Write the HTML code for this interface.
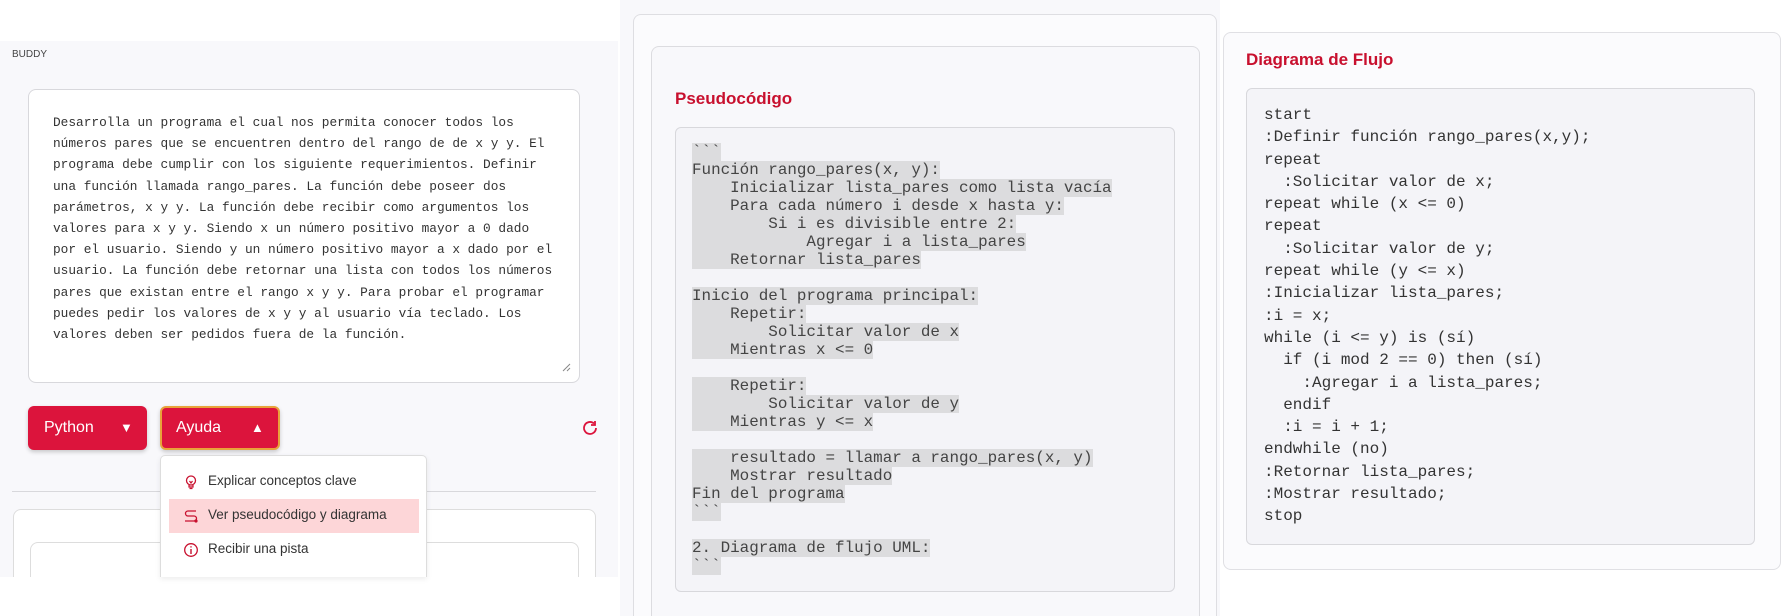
<!DOCTYPE html>
<html><head><meta charset="utf-8"><style>
*{box-sizing:border-box;margin:0;padding:0}
html,body{width:1781px;height:616px;overflow:hidden}
body{background:#fff;position:relative;font-family:"Liberation Sans",sans-serif}
.abs{position:absolute}
#left{left:0;top:41px;width:618px;height:536px;background:#f8f8fb}
.buddy{left:12px;top:49px;font-size:10px;color:#444}
.ta{left:28px;top:89px;width:552px;height:294px;background:#fff;border:1px solid #d8d8dc;border-radius:8px}
.tatext{left:53px;top:112px;font-family:"Liberation Mono",monospace;font-size:12.8px;line-height:21.2px;color:#333;white-space:pre}
.btn{top:406px;height:44px;border-radius:6px;background:#dc143c;color:#fff;font-size:16px;box-shadow:0 2px 4px rgba(0,0,0,.2)}
.btn span{position:absolute;top:13px}
.dd{left:160px;top:455px;width:267px;height:122px;background:#fff;border:1px solid #ddd;border-bottom:none;border-radius:5px 5px 0 0;box-shadow:0 2px 6px rgba(0,0,0,.08);overflow:hidden}
.item{position:absolute;left:27px;font-size:13.5px;color:#333}
.mid{background:#f8f8fb}
.code{font-family:"Liberation Mono",monospace;white-space:pre}
.hl{background:#dcdcde}
</style></head><body>
<div id="left" class="abs"></div>
<div class="abs buddy">BUDDY</div>
<div class="abs ta"></div>
<div class="abs tatext">Desarrolla un programa el cual nos permita conocer todos los
números pares que se encuentren dentro del rango de de x y y. El
programa debe cumplir con los siguiente requerimientos. Definir
una función llamada rango_pares. La función debe poseer dos
parámetros, x y y. La función debe recibir como argumentos los
valores para x y y. Siendo x un número positivo mayor a 0 dado
por el usuario. Siendo y un número positivo mayor a x dado por el
usuario. La función debe retornar una lista con todos los números
pares que existan entre el rango x y y. Para probar el programar
puedes pedir los valores de x y y al usuario vía teclado. Los
valores deben ser pedidos fuera de la función.</div>
<svg class="abs" style="left:561px;top:362px" width="10" height="10"><path d="M2 9L9 2M6 9L9 6" stroke="#888" stroke-width="1"/></svg>
<div class="abs btn" style="left:28px;width:119px"><span style="left:16px">Python</span><span style="left:92px;font-size:13px;top:14px">▼</span></div>
<div class="abs btn" style="left:160px;width:120px;border:2px solid #e8a33a"><span style="left:14px;top:11px">Ayuda</span><span style="left:89px;font-size:13px;top:12px">▲</span></div>
<svg class="abs" style="left:581px;top:419px" width="18" height="18" viewBox="0 0 18 18"><path d="M15 9a6 6 0 1 1-2-4.5" fill="none" stroke="#dc143c" stroke-width="1.8"/><path d="M14 2v4h-4" fill="none" stroke="#dc143c" stroke-width="1.8"/></svg>
<div class="abs" style="left:12px;top:491px;width:584px;height:1px;background:#d8d8dc"></div>
<div class="abs" style="left:13px;top:509px;width:583px;height:80px;background:#fff;border:1px solid #ddd;border-radius:8px"></div>
<div class="abs" style="left:30px;top:542px;width:549px;height:50px;background:#fff;border:1px solid #ddd;border-radius:8px"></div>
<div class="abs" style="left:0;top:577px;width:620px;height:39px;background:#fff"></div>
<div class="abs dd">
 <div class="abs" style="left:8px;top:43px;width:250px;height:34px;background:#fdd6d8"></div>
 <svg class="abs" style="left:22px;top:18px" width="16" height="16" viewBox="0 0 16 16"><circle cx="8" cy="6.5" r="4.5" fill="none" stroke="#c8102e" stroke-width="1.3"/><path d="M6 11v2h4v-2M6.5 14.5h3M6.5 7l1.5 2 1.5-2" fill="none" stroke="#c8102e" stroke-width="1.2"/></svg>
 <div class="item" style="top:17px;left:47px">Explicar conceptos clave</div>
 <svg class="abs" style="left:22px;top:52px" width="16" height="16" viewBox="0 0 16 16"><path d="M13 3H5a2.5 2.5 0 0 0 0 5h6a2.5 2.5 0 0 1 0 5H2" fill="none" stroke="#c8102e" stroke-width="1.3"/><circle cx="13" cy="13" r="1.6" fill="#c8102e"/></svg>
 <div class="item" style="top:51px;left:47px">Ver pseudocódigo y diagrama</div>
 <svg class="abs" style="left:22px;top:86px" width="16" height="16" viewBox="0 0 16 16"><circle cx="8" cy="8" r="6.3" fill="none" stroke="#c8102e" stroke-width="1.3"/><path d="M8 7v5M8 4.3v1.2" stroke="#c8102e" stroke-width="1.4"/></svg>
 <div class="item" style="top:85px;left:47px">Recibir una pista</div>
</div>

<div class="abs mid" style="left:620px;top:0;width:600px;height:616px"></div>
<div class="abs" style="left:633px;top:14px;width:584px;height:602px;background:#fbfbfd;border:1px solid #dedee2;border-bottom:none;border-radius:8px 8px 0 0"></div>
<div class="abs" style="left:651px;top:46px;width:549px;height:570px;background:#f8f8fb;border:1px solid #dcdce0;border-bottom:none;border-radius:8px 8px 0 0"></div>
<div class="abs" style="left:675px;top:89px;font-size:17px;font-weight:bold;color:#c8102e">Pseudocódigo</div>
<div class="abs" style="left:675px;top:127px;width:500px;height:465px;background:#f4f4f8;border:1px solid #d8d8dc;border-radius:6px"></div>
<div class="abs code" style="left:692px;top:143px;font-size:15.9px;line-height:18px;color:#444"><span class="hl">&#96;&#96;&#96;
Función rango_pares(x, y):
    Inicializar lista_pares como lista vacía
    Para cada número i desde x hasta y:
        Si i es divisible entre 2:
            Agregar i a lista_pares
    Retornar lista_pares</span>

<span class="hl">Inicio del programa principal:
    Repetir:
        Solicitar valor de x
    Mientras x &lt;= 0</span>

<span class="hl">    Repetir:
        Solicitar valor de y
    Mientras y &lt;= x</span>

<span class="hl">    resultado = llamar a rango_pares(x, y)
    Mostrar resultado
Fin del programa
&#96;&#96;&#96;</span>

<span class="hl">2. Diagrama de flujo UML:
&#96;&#96;&#96;</span></div>

<div class="abs" style="left:1223px;top:32px;width:558px;height:538px;background:#fbfbfd;border:1px solid #e0e0e4;border-radius:8px"></div>
<div class="abs" style="left:1246px;top:50px;font-size:17px;font-weight:bold;color:#c8102e">Diagrama de Flujo</div>
<div class="abs" style="left:1246px;top:88px;width:509px;height:457px;background:#f4f4f8;border:1px solid #d8d8dc;border-radius:6px"></div>
<div class="abs code" style="left:1264px;top:104px;font-size:16px;line-height:22.3px;color:#333">start
:Definir función rango_pares(x,y);
repeat
  :Solicitar valor de x;
repeat while (x &lt;= 0)
repeat
  :Solicitar valor de y;
repeat while (y &lt;= x)
:Inicializar lista_pares;
:i = x;
while (i &lt;= y) is (sí)
  if (i mod 2 == 0) then (sí)
    :Agregar i a lista_pares;
  endif
  :i = i + 1;
endwhile (no)
:Retornar lista_pares;
:Mostrar resultado;
stop</div>
</body></html>
